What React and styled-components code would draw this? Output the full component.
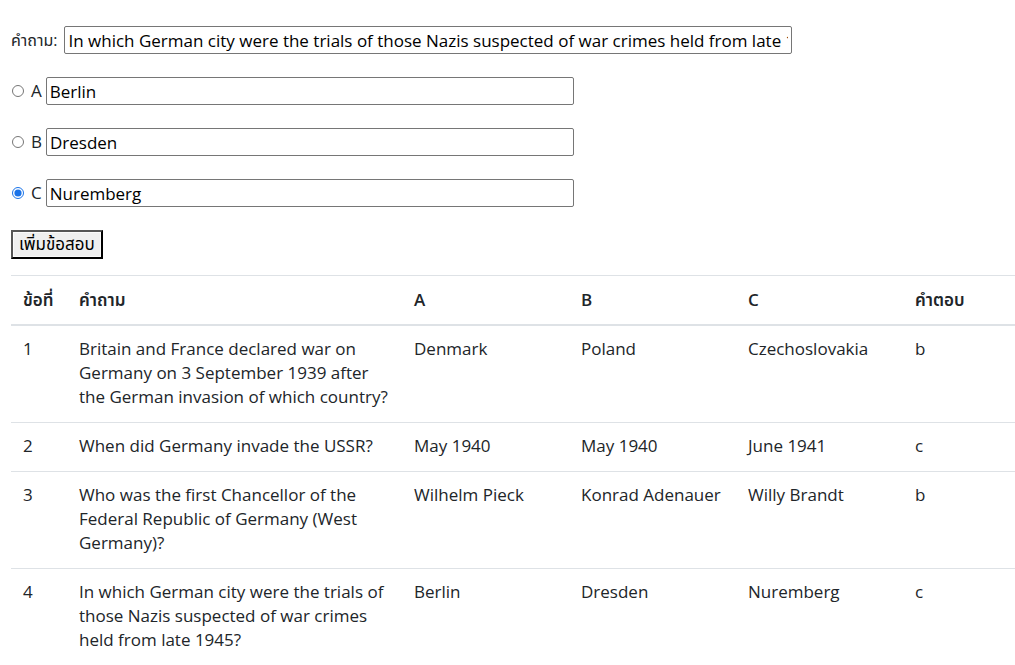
import React, { useState } from "react";
import styled, { createGlobalStyle } from "styled-components";

const GlobalStyle = createGlobalStyle`
  body {
    margin: 0;
    font-family: "Open Sans", "Noto Sans Thai", "Noto Sans", sans-serif;
    font-size: 17px;
    line-height: 24px;
    color: #212529;
    background: #fff;
  }
`;

const Page = styled.div`
  padding: 26px 0 0 11px;
  width: 1004px;
`;

const Form = styled.form`
  display: flex;
  flex-direction: column;
  align-items: flex-start;
  gap: 23px;
`;

const Row = styled.div`
  display: flex;
  align-items: center;
  height: 28px;
`;

const Label = styled.label`
  margin-right: ${(p) => (p.$gap ? p.$gap : 5)}px;
  font-size: ${(p) => (p.$small ? 16 : 17)}px;
  color: #212529;
`;

const Radio = styled.input`
  margin: 0 7px 0 1px;
  width: 12px;
  height: 12px;
  accent-color: #1a73e8;
`;

const TextInput = styled.input`
  box-sizing: border-box;
  height: 28px;
  width: ${(p) => p.$width}px;
  padding: 0 3px;
  border: 1px solid #767676;
  border-radius: 2px;
  font-family: inherit;
  font-size: 17px;
  color: #000;
`;

const AddButton = styled.button`
  height: 29px;
  padding: 0 6px;
  font-family: inherit;
  font-size: 17px;
  color: #000;
  background: #efefef;
  border: 2px outset #555;
  border-radius: 0;
  box-shadow: inset 0 0 0 1px #fafafa;
`;

const Table = styled.table`
  margin-top: 16px;
  width: 1004px;
  border-collapse: collapse;
  table-layout: fixed;
`;

const Th = styled.th`
  text-align: left;
  vertical-align: bottom;
  padding: 12px;
  font-weight: 600;
  border-top: 1px solid #dee2e6;
  border-bottom: 2px solid #dee2e6;
  width: ${(p) => p.$w}px;
`;

const Td = styled.td`
  vertical-align: top;
  padding: 11px 12px 13px;
  border-top: 1px solid #dee2e6;
`;

const questions = [
  {
    q: "Britain and France declared war on Germany on 3 September 1939 after the German invasion of which country?",
    a: "Denmark",
    b: "Poland",
    c: "Czechoslovakia",
    ans: "b",
  },
  { q: "When did Germany invade the USSR?", a: "May 1940", b: "May 1940", c: "June 1941", ans: "c" },
  {
    q: "Who was the first Chancellor of the Federal Republic of Germany (West Germany)?",
    a: "Wilhelm Pieck",
    b: "Konrad Adenauer",
    c: "Willy Brandt",
    ans: "b",
  },
  {
    q: "In which German city were the trials of those Nazis suspected of war crimes held from late 1945?",
    a: "Berlin",
    b: "Dresden",
    c: "Nuremberg",
    ans: "c",
  },
];

export default function App() {
  const [question, setQuestion] = useState(questions[3].q);
  const [choices, setChoices] = useState({ a: "Berlin", b: "Dresden", c: "Nuremberg" });
  const [answer, setAnswer] = useState("c");

  const options = [
    { key: "a", label: "A" },
    { key: "b", label: "B" },
    { key: "c", label: "C" },
  ];

  return (
    <Page>
      <GlobalStyle />
      <Form onSubmit={(e) => e.preventDefault()}>
        <Row>
          <Label htmlFor="q" $gap={7} $small>คำถาม:</Label>
          <TextInput id="q" $width={728} value={question} onChange={(e) => setQuestion(e.target.value)} />
        </Row>
        {options.map((o) => (
          <Row key={o.key}>
            <Radio
              type="radio"
              name="answer"
              checked={answer === o.key}
              onChange={() => setAnswer(o.key)}
            />
            <Label $gap={4}>{o.label}</Label>
            <TextInput
              $width={528}
              value={choices[o.key]}
              onChange={(e) => setChoices({ ...choices, [o.key]: e.target.value })}
            />
          </Row>
        ))}
        <AddButton type="submit">เพิ่มข้อสอบ</AddButton>
      </Form>
      <Table>
        <thead>
          <tr>
            <Th $w={32}>ข้อที่</Th>
            <Th $w={311}>คำถาม</Th>
            <Th $w={143}>A</Th>
            <Th $w={143}>B</Th>
            <Th $w={143}>C</Th>
            <Th $w={88}>คำตอบ</Th>
          </tr>
        </thead>
        <tbody>
          {questions.map((r, i) => (
            <tr key={i}>
              <Td>{i + 1}</Td>
              <Td>{r.q}</Td>
              <Td>{r.a}</Td>
              <Td>{r.b}</Td>
              <Td>{r.c}</Td>
              <Td>{r.ans}</Td>
            </tr>
          ))}
        </tbody>
      </Table>
    </Page>
  );
}
